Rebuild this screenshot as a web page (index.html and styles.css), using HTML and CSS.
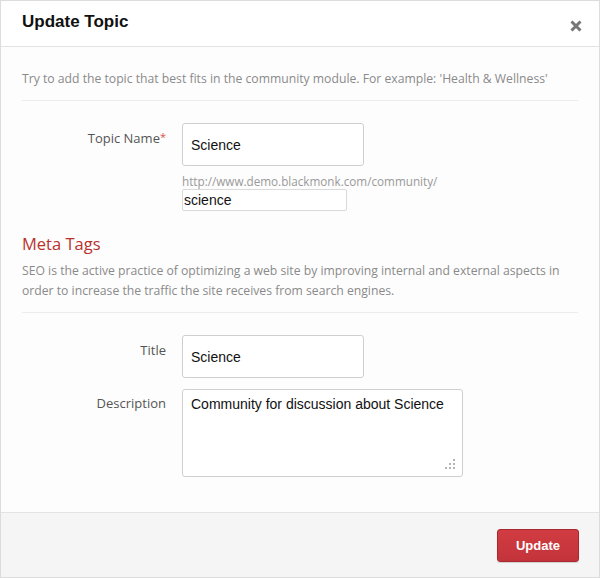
FILE: index.html
```html
<!DOCTYPE html>
<html>
<head>
<meta charset="utf-8">
<link rel="stylesheet" href="styles.css">
</head>
<body>
<div class="modal">
  <div class="modal-header">
    <h1 class="modal-title">Update Topic</h1>
    <span class="close" aria-label="Close">
      <svg width="12" height="12" viewBox="0 0 12 12"><path d="M1.5 1.5L10.5 10.5M10.5 1.5L1.5 10.5" stroke="#777" stroke-width="3" stroke-linecap="butt"/></svg>
    </span>
  </div>
  <div class="modal-body">
    <p class="intro">Try to add the topic that best fits in the community module. For example: 'Health &amp; Wellness'</p>
    <div class="form-row first">
      <label class="label">Topic Name<span class="req">*</span></label>
      <div class="field">
        <input class="input" type="text" value="Science">
        <div class="url">http://www.demo.blackmonk.com/community/</div>
        <input class="slug" type="text" value="science">
      </div>
    </div>
    <h2 class="section-title">Meta Tags</h2>
    <p class="section-desc">SEO is the active practice of optimizing a web site by improving internal and external aspects in order to increase the traffic the site receives from search engines.</p>
    <div class="form-row first">
      <label class="label">Title</label>
      <div class="field">
        <input class="input" type="text" value="Science">
      </div>
    </div>
    <div class="form-row second">
      <label class="label">Description</label>
      <div class="field textarea-wrap">
        <textarea class="textarea">Community for discussion about Science</textarea>
        <svg class="grip" width="12" height="12" viewBox="0 0 12 12"><g fill="#b5b5b5"><rect x="9" y="1" width="2" height="2"/><rect x="5" y="5" width="2" height="2"/><rect x="9" y="5" width="2" height="2"/><rect x="1" y="9" width="2" height="2"/><rect x="5" y="9" width="2" height="2"/><rect x="9" y="9" width="2" height="2"/></g></svg>
      </div>
    </div>
  </div>
  <div class="modal-footer">
    <button class="btn" type="button">Update</button>
  </div>
</div>
</body>
</html>
```

FILE: styles.css
```css
* { box-sizing: border-box; }
html, body { margin: 0; padding: 0; }
body {
  width: 600px;
  height: 578px;
  background: #fff;
  font-family: "Open Sans", "Liberation Sans", sans-serif;
}
.modal {
  width: 600px;
  height: 578px;
  border: 1px solid #dcdcdc;
  display: flex;
  flex-direction: column;
  background: #fdfdfd;
}
.modal-header {
  height: 46px;
  border-bottom: 1px solid #e3e3e3;
  background: #fff;
  display: flex;
  align-items: center;
  justify-content: space-between;
  padding: 0 17px 0 21px;
}
.modal-title {
  margin: 0;
  font-family: "Liberation Sans", Arial, sans-serif;
  font-size: 17px;
  font-weight: bold;
  color: #111;
  position: relative;
  top: -2px;
}
.close {
  display: flex;
  width: 12px;
  height: 12px;
  margin-top: 5px;
}
.modal-body {
  flex: 1;
  padding: 22px 21px 0 21px;
}
.intro {
  margin: 0;
  font-size: 12.2px;
  line-height: 20px;
  color: #8a8a8a;
  padding-bottom: 11px;
  border-bottom: 1px solid #ececec;
}
.form-row {
  display: flex;
  gap: 16px;
}
.form-row.first { margin-top: 22px; }
.form-row.second { margin-top: 11px; }
.label {
  width: 144px;
  flex: none;
  text-align: right;
  font-size: 13px;
  line-height: 20px;
  color: #555;
  padding-top: 5px;
}
.form-row.second .label { padding-top: 4px; }
.req { color: #d9534f; position: relative; top: -2px; font-size: 11px; }
.field { display: flex; flex-direction: column; align-items: flex-start; }
.input {
  width: 182px;
  height: 43px;
  border: 1px solid #cfcfcf;
  border-radius: 3px;
  padding: 0 8px;
  font-family: "Liberation Sans", Arial, sans-serif;
  font-size: 14px;
  color: #111;
  background: #fff;
  margin: 0;
}
.url {
  margin-top: 7px;
  font-size: 11.7px;
  line-height: 16px;
  color: #999;
}
.slug {
  width: 165px;
  height: 22px;
  border: 1px solid #dadada;
  border-radius: 2px;
  padding: 0 1px;
  font-family: "Liberation Sans", Arial, sans-serif;
  font-size: 14px;
  color: #111;
  background: #fff;
  margin: 0;
}
.section-title {
  margin: 21px 0 0 0;
  font-size: 16.5px;
  font-weight: normal;
  line-height: 24px;
  color: #b8312f;
}
.section-desc {
  margin: 5px 0 0 0;
  font-size: 12.2px;
  line-height: 20px;
  color: #8a8a8a;
  padding-bottom: 11px;
  border-bottom: 1px solid #ececec;
}
.textarea-wrap { position: relative; }
.textarea {
  width: 281px;
  height: 88px;
  border: 1px solid #cfcfcf;
  border-radius: 3px;
  padding: 5px 8px;
  font-family: "Liberation Sans", Arial, sans-serif;
  font-size: 14px;
  line-height: 18px;
  color: #111;
  background: #fff;
  resize: none;
  margin: 0;
  display: block;
}
.grip {
  position: absolute;
  right: 7px;
  bottom: 7px;
}
.modal-footer {
  height: 65px;
  border-top: 1px solid #e3e3e3;
  background: #f5f5f5;
  display: flex;
  justify-content: flex-end;
  align-items: flex-start;
  padding: 16px 20px 0 0;
}
.btn {
  width: 82px;
  height: 33px;
  border: 1px solid #a8282d;
  border-radius: 3px;
  background: linear-gradient(#d03c42, #c3343a);
  color: #fff;
  font-family: "Liberation Sans", Arial, sans-serif;
  font-size: 13px;
  font-weight: bold;
  box-shadow: 0 1px 1px rgba(0,0,0,0.15);
  padding: 0;
}
```
